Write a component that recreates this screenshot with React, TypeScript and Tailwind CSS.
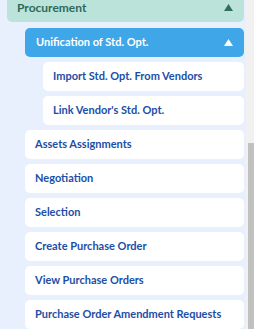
const subItems = ["Import Std. Opt. From Vendors", "Link Vendor's Std. Opt."];

const items = [
  "Assets Assignments",
  "Negotiation",
  "Selection",
  "Create Purchase Order",
  "View Purchase Orders",
  "Purchase Order Amendment Requests",
];

function Caret({ color }: { color: string }) {
  return (
    <svg width="9" height="7" viewBox="0 0 9 7" className="shrink-0">
      <polygon points="4.5,0 9,7 0,7" fill={color} />
    </svg>
  );
}

export default function App() {
  return (
    <div
      className="flex h-[329px] w-[254px] overflow-hidden bg-[#e8f0fd]"
      style={{ fontFamily: "Lato, 'Open Sans', sans-serif" }}
    >
      <div className="flex w-[246px] flex-col pl-[7px] pr-[2px]">
        <div className="flex h-[25px] items-start justify-between rounded-b-[5px] bg-[#bce3d9] pl-[10px] pr-[11px] pt-[1px]">
          <span className="text-[12px] font-bold leading-[14px] text-[#2d6a5b]">Procurement</span>
          <div className="pt-[3px]">
            <Caret color="#2f6e5c" />
          </div>
        </div>

        <div className="mt-[6px] flex flex-col gap-[5px] pl-[18px]">
          <div className="flex h-[29px] items-center justify-between rounded-[5px] bg-[#3fa7e7] pl-[11px] pr-[11px]">
            <span className="text-[11px] font-bold text-white">Unification of Std. Opt.</span>
            <Caret color="#ffffff" />
          </div>

          <div className="flex flex-col gap-[5px] pl-[18px]">
            {subItems.map((t) => (
              <div key={t} className="flex h-[29px] items-center rounded-[5px] bg-white pl-[10px]">
                <span className="text-[11px] font-bold text-[#1c4ea6]">{t}</span>
              </div>
            ))}
          </div>

          {items.map((t) => (
            <div key={t} className="flex h-[29px] items-center rounded-[5px] bg-white pl-[10px]">
              <span className="text-[11px] font-bold text-[#1c4ea6]">{t}</span>
            </div>
          ))}
        </div>
      </div>

      <div className="flex w-[8px] flex-col bg-[#f1f1f1]">
        <div className="h-[143px]" />
        <div className="ml-[2px] flex-1 bg-[#c1c1c1]" />
      </div>
    </div>
  );
}
